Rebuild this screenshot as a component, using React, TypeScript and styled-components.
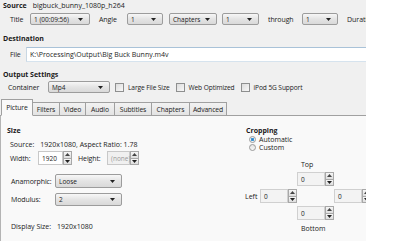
import React from 'react';
import styled, { createGlobalStyle } from 'styled-components';

const GlobalStyle = createGlobalStyle`
    body {
        margin: 0;
        background: #ffffff;
        font-family: 'Open Sans', 'Liberation Sans', sans-serif;
        font-size: 7px;
        color: #1e1e1e;
    }
`;

// tab names with the widths the reference shows
const tabs: [string, number][] = [
    ['Picture', 32],
    ['Filters', 27],
    ['Video', 26],
    ['Audio', 29],
    ['Subtitles', 37],
    ['Chapters', 38],
    ['Advanced', 37],
];

const Arrow = () => (
    <svg width="5" height="3" viewBox="0 0 5 3">
        <path d="M0 0 L5 0 L2.5 3 Z" fill="#222" />
    </svg>
);

const Select = ({ value, width }: { value: string; width: number }) => (
    <Drop style={{ width }}>
        <span>{value}</span>
        <Arrow />
    </Drop>
);

const Spinner = ({ value, light, disabled }: { value: string; light?: boolean; disabled?: boolean }) => (
    <Spin>
        <SpinBox light={light} disabled={disabled}>
            {value}
        </SpinBox>
        <SpinButtons>
            <SpinBtn>
                <svg width="5" height="3" viewBox="0 0 5 3">
                    <path d="M0 3 L5 3 L2.5 0 Z" fill="#444" />
                </svg>
            </SpinBtn>
            <SpinBtn>
                <Arrow />
            </SpinBtn>
        </SpinButtons>
    </Spin>
);

const App = () => {
    return (
        <>
            <GlobalStyle />
            <Window>
                <Row height={10}>
                    <Bold>Source</Bold>
                    <Label indent={6}>bigbuck_bunny_1080p_h264</Label>
                </Row>
                <Row height={12} top={3} indent={7}>
                    <FieldLabel w={20}>Title</FieldLabel>
                    <Select value="1 (00:09:56)" width={60} />
                    <Gap w={9} />
                    <FieldLabel w={28}>Angle</FieldLabel>
                    <Select value="1" width={36} />
                    <Gap w={6} />
                    <Select value="Chapters" width={48} />
                    <Gap w={5} />
                    <Select value="1" width={37} />
                    <Gap w={9} />
                    <FieldLabel w={34}>through</FieldLabel>
                    <Select value="1" width={36} />
                    <Gap w={9} />
                    <Label>Duration</Label>
                </Row>

                <Row height={10} top={8}>
                    <Bold>Destination</Bold>
                </Row>
                <Row height={14} top={4} indent={7}>
                    <FieldLabel w={16}>File</FieldLabel>
                    <FileInput>K:\Processing\Output\Big Buck Bunny.m4v</FileInput>
                </Row>

                <Row height={10} top={8}>
                    <Bold>Output Settings</Bold>
                </Row>
                <Row height={12} top={2} indent={5}>
                    <FieldLabel w={40}>Container</FieldLabel>
                    <Select value="Mp4" width={62} />
                    <Gap w={5} />
                    <Check />
                    <CheckLabel>Large File Size</CheckLabel>
                    <Check />
                    <CheckLabel>Web Optimized</CheckLabel>
                    <Check />
                    <CheckLabel>iPod 5G Support</CheckLabel>
                </Row>

                <TabBar>
                    {tabs.map(([t, w], i) => (
                        <Tab key={t} active={i === 0} style={{ width: w }}>
                            {t}
                        </Tab>
                    ))}
                </TabBar>

                <Panel>
                    <SizeColumn>
                        <Row height={10}>
                            <Bold>Size</Bold>
                        </Row>
                        <Row height={10} top={4} indent={3}>
                            <Label>Source:</Label>
                            <Label indent={6}>1920x1080, Aspect Ratio: 1.78</Label>
                        </Row>
                        <Row height={12} top={3} indent={3}>
                            <FieldLabel w={28}>Width:</FieldLabel>
                            <Spinner value="1920" />
                            <Gap w={6} />
                            <FieldLabel w={29}>Height:</FieldLabel>
                            <Spinner value="(none)" disabled />
                        </Row>
                        <Row height={14} top={10} indent={4}>
                            <FieldLabel w={44}>Anamorphic:</FieldLabel>
                            <Select value="Loose" width={67} />
                        </Row>
                        <Row height={13} top={5} indent={4}>
                            <FieldLabel w={44}>Modulus:</FieldLabel>
                            <Select value="2" width={67} />
                        </Row>
                        <Row height={10} top={15} indent={4}>
                            <Label>Display Size:</Label>
                            <Label indent={6}>1920x1080</Label>
                        </Row>
                    </SizeColumn>

                    <CropColumn>
                        <Row height={10}>
                            <Bold>Cropping</Bold>
                        </Row>
                        <RadioRow>
                            <Radio checked />
                            <Label indent={3}>Automatic</Label>
                        </RadioRow>
                        <RadioRow>
                            <Radio />
                            <Label indent={3}>Custom</Label>
                        </RadioRow>
                        <CropGrid>
                            <CropLabel col={3} row={1}>Top</CropLabel>
                            <Cell col={3} row={2}>
                                <Spinner value="0" light />
                            </Cell>
                            <CropLabel col={1} row={3} left>
                                Left
                            </CropLabel>
                            <Cell col={2} row={3}>
                                <Spinner value="0" light />
                            </Cell>
                            <Cell col={4} row={3}>
                                <Spinner value="0" light />
                            </Cell>
                            <Cell col={3} row={4}>
                                <Spinner value="0" light />
                            </Cell>
                            <CropLabel col={3} row={5}>Bottom</CropLabel>
                        </CropGrid>
                    </CropColumn>
                </Panel>
            </Window>
        </>
    );
};

export default App;

const Window = styled.div`
    width: 366px;
    height: 241px;
    background: #f0f0f0;
    overflow: hidden;
    padding-left: 3px;
    box-sizing: border-box;
    white-space: nowrap;
`;

const Row = styled.div<{ height: number; top?: number; indent?: number }>`
    display: flex;
    align-items: center;
    height: ${(p) => p.height}px;
    margin-top: ${(p) => p.top || 0}px;
    padding-left: ${(p) => p.indent || 0}px;
`;

const Bold = styled.span`
    font-weight: 700;
    font-size: 7px;
    color: #1a1a1a;
`;

const Label = styled.span<{ indent?: number }>`
    margin-left: ${(p) => p.indent || 0}px;
    color: #222;
`;

const FieldLabel = styled.span<{ w: number }>`
    flex: none;
    width: ${(p) => p.w}px;
    color: #222;
    letter-spacing: -0.1px;
`;

const CheckLabel = styled.span`
    flex: none;
    margin: 0 6px 0 4px;
    font-size: 6.6px;
    letter-spacing: -0.1px;
    color: #222;
`;

const Gap = styled.span<{ w: number }>`
    display: inline-block;
    flex: none;
    width: ${(p) => p.w}px;
`;

const Drop = styled.div`
    flex: none;
    box-sizing: border-box;
    height: 100%;
    display: flex;
    align-items: center;
    justify-content: space-between;
    padding: 0 6px 0 3px;
    border: 1px solid #9c9c9c;
    border-radius: 2px;
    background: linear-gradient(#f7f7f7, #e4e4e4 50%, #d9d9d9);
    font-size: 6.5px;
    color: #222;
    overflow: hidden;
`;

const FileInput = styled.div`
    flex: 1;
    height: 13px;
    margin-right: -4px;
    display: flex;
    align-items: center;
    padding-left: 3px;
    background: #ffffff;
    border-top: 1px solid #a9c2d8;
    border-bottom: 1px solid #d6e3ee;
    border-left: 1px solid #c9d7e3;
    font-size: 7px;
`;

const Check = styled.span`
    flex: none;
    width: 7px;
    height: 7px;
    border: 1px solid #8e8f8f;
    background: linear-gradient(135deg, #dcdcdc, #f8f8f8);
`;

const TabBar = styled.div`
    display: flex;
    align-items: flex-end;
    height: 17px;
    margin-top: 5px;
    margin-left: -3px;
    padding-left: 1px;
    border-bottom: 1px solid #a0a0a0;
`;

const Tab = styled.div<{ active?: boolean }>`
    flex: none;
    box-sizing: border-box;
    height: ${(p) => (p.active ? 17 : 14)}px;
    margin-bottom: -1px;
    display: flex;
    align-items: center;
    justify-content: center;
    border: 1px solid #a0a0a0;
    border-left-width: ${(p) => (p.active ? 1 : 0)}px;
    border-bottom-color: ${(p) => (p.active ? '#f9f9f9' : '#a0a0a0')};
    background: ${(p) => (p.active ? '#f9f9f9' : 'linear-gradient(#f2f2f2, #e3e3e3)')};
    color: #222;
    font-size: 6.8px;
    letter-spacing: -0.1px;
`;

const Panel = styled.div`
    display: flex;
    margin-left: -3px;
    height: 128px;
    padding: 9px 0 0 6px;
    box-sizing: border-box;
    background: #f9f9f9;
    border-left: 1px solid #b4b4b4;
`;

const SizeColumn = styled.div`
    width: 239px;
    flex: none;
`;

const CropColumn = styled.div`
    flex: none;
`;

const RadioRow = styled.div`
    display: flex;
    align-items: center;
    height: 8px;
    padding-left: 3px;
`;

const Radio = styled.span<{ checked?: boolean }>`
    box-sizing: border-box;
    width: 7px;
    height: 7px;
    border-radius: 50%;
    border: 1px solid #9a9a9a;
    background: ${(p) =>
        p.checked ? 'radial-gradient(circle, #2a82c9 0, #4ea2dc 45%, #eef2f5 55%)' : 'linear-gradient(#e4e4e4, #f6f6f6)'};
`;

const CropGrid = styled.div`
    display: grid;
    grid-template-columns: 15px 37px 37px 37px;
    grid-template-rows: 10px 14px 14px 14px 10px;
    row-gap: 3px;
    margin-top: 8px;
    margin-left: -1px;
`;

const Cell = styled.div<{ col: number; row: number }>`
    grid-column: ${(p) => p.col};
    grid-row: ${(p) => p.row};
`;

const CropLabel = styled.div<{ col: number; row: number; left?: boolean }>`
    grid-column: ${(p) => p.col};
    grid-row: ${(p) => p.row};
    display: flex;
    align-items: center;
    padding-left: ${(p) => (p.left ? 0 : 4)}px;
    color: #222;
`;

const Spin = styled.div`
    display: flex;
    height: 14px;
    flex: none;
`;

const SpinBox = styled.div<{ light?: boolean; disabled?: boolean }>`
    box-sizing: border-box;
    width: ${(p) => (p.disabled ? 23 : p.light ? 28 : 25)}px;
    height: 100%;
    display: flex;
    align-items: center;
    padding-left: 3px;
    border: 1px solid ${(p) => (p.light ? '#d0d0d0' : '#c8c8c8')};
    background: ${(p) => (p.disabled ? '#f0f0f0' : p.light ? '#f3f3f3' : '#ffffff')};
    color: ${(p) => (p.disabled ? '#9a9a9a' : '#222')};
    font-size: 6.5px;
`;

const SpinButtons = styled.div`
    display: flex;
    flex-direction: column;
    width: 9px;
`;

const SpinBtn = styled.div`
    flex: 1;
    display: flex;
    align-items: center;
    justify-content: center;
    box-sizing: border-box;
    border: 1px solid #a8a8a8;
    background: linear-gradient(#f6f6f6, #dedede);
    & + & {
        border-top: 0;
    }
`;
